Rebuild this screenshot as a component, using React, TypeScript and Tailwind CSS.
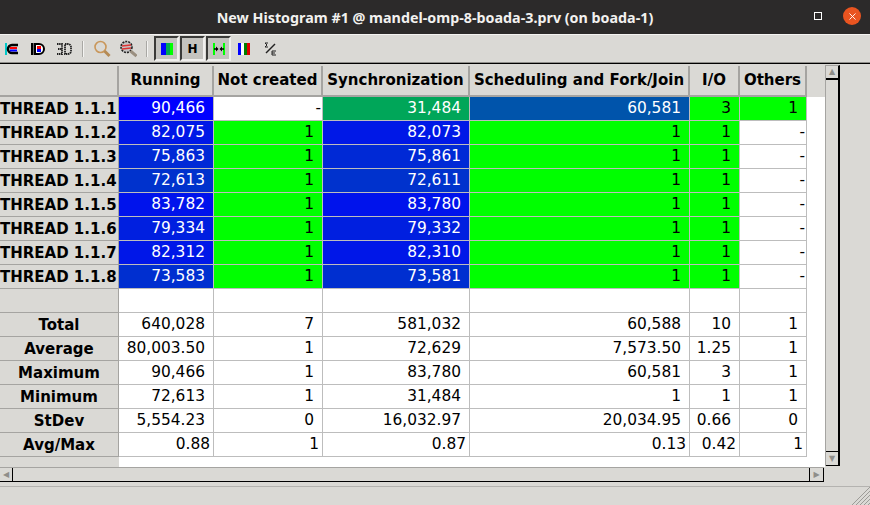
import { X } from 'lucide-react';

type Cell = { text: string; bg?: string; light?: boolean };

const columns = [
  { title: 'Running', width: 'w-[95px]' },
  { title: 'Not created', width: 'w-[109px]' },
  { title: 'Synchronization', width: 'w-[147px]' },
  { title: 'Scheduling and Fork/Join', width: 'w-[220px]' },
  { title: 'I/O', width: 'w-[50px]' },
  { title: 'Others', width: 'w-[67px]' },
];

const green = 'bg-[#00ff00]';

const threadRow = (label: string, running: string, sync: string, bg: string) => ({
  label,
  cells: [
    { text: running, bg, light: true },
    { text: '1', bg: green },
    { text: sync, bg, light: true },
    { text: '1', bg: green },
    { text: '1', bg: green },
    { text: '-' },
  ] as Cell[],
});

const threads = [
  {
    label: 'THREAD 1.1.1',
    cells: [
      { text: '90,466', bg: 'bg-[#0000ff]', light: true },
      { text: '-' },
      { text: '31,484', bg: 'bg-[#00a659]', light: true },
      { text: '60,581', bg: 'bg-[#0054ab]', light: true },
      { text: '3', bg: green },
      { text: '1', bg: green },
    ] as Cell[],
  },
  threadRow('THREAD 1.1.2', '82,075', '82,073', 'bg-[#0018e7]'),
  threadRow('THREAD 1.1.3', '75,863', '75,861', 'bg-[#0029d6]'),
  threadRow('THREAD 1.1.4', '72,613', '72,611', 'bg-[#0032cd]'),
  threadRow('THREAD 1.1.5', '83,782', '83,780', 'bg-[#0013ec]'),
  threadRow('THREAD 1.1.6', '79,334', '79,332', 'bg-[#001fe0]'),
  threadRow('THREAD 1.1.7', '82,312', '82,310', 'bg-[#0017e8]'),
  threadRow('THREAD 1.1.8', '73,583', '73,581', 'bg-[#002fd0]'),
];

const stats = [
  { label: 'Total', values: ['640,028', '7', '581,032', '60,588', '10', '1'] },
  { label: 'Average', values: ['80,003.50', '1', '72,629', '7,573.50', '1.25', '1'] },
  { label: 'Maximum', values: ['90,466', '1', '83,780', '60,581', '3', '1'] },
  { label: 'Minimum', values: ['72,613', '1', '31,484', '1', '1', '1'] },
  { label: 'StDev', values: ['5,554.23', '0', '16,032.97', '20,034.95', '0.66', '0'] },
  { label: 'Avg/Max', values: ['0.88', '1', '0.87', '0.13', '0.42', '1'] },
];

const Row = ({ label, cells, center, tight }: { label: string; cells: Cell[]; center?: boolean; tight?: boolean }) => (
  <div className="flex h-6">
    <div className={`flex w-[119px] items-center whitespace-nowrap border-r border-b border-[#a5a4a1] bg-[#dad9d5] pt-px text-[15px] font-bold ${center ? 'justify-center' : ''}`}>
      {label}
    </div>
    {cells.map((cell, i) => (
      <div
        key={i}
        className={`flex ${columns[i].width} items-center justify-end border-r border-b border-[#bdbdbd] pt-px ${cell.text === '-' ? 'pr-px' : tight ? 'pr-[3px]' : 'pr-2'} ${cell.bg ?? 'bg-white'} ${cell.light ? 'text-white' : 'text-black'}`}
      >
        {cell.text}
      </div>
    ))}
  </div>
);

const ToolButton = ({ children }: { children: React.ReactNode }) => (
  <div className="flex h-[25px] w-[25px] items-center justify-center border-2 border-[#3a3a38] border-r-[#f0efed] border-b-[#f0efed] bg-[#c4c3bf]">
    {children}
  </div>
);

const Separator = () => <div className="h-[16px] w-[2px] border-l border-[#a9a8a4] bg-[#f4f4f2]" />;

const ToolbarIcons = () => (
  <div className="flex h-[27px] items-center pl-[4px]">
    <svg width="16" height="16" viewBox="0 0 16 16">
      <rect x="1" y="2" width="2" height="12" fill="#00c8c8" />
      <path d="M14 4H8a4 4 0 0 0 0 8h6" fill="none" stroke="#000" strokeWidth="2.5" />
      <path d="M6 7h7" stroke="#f00" strokeWidth="2" />
      <path d="M6 9.5h7" stroke="#00f" strokeWidth="2" />
    </svg>
    <div className="w-[10px]" />
    <svg width="16" height="16" viewBox="0 0 16 16">
      <rect x="1" y="2" width="2.5" height="12" fill="#000" />
      <path d="M5 3h4a5 5 0 0 1 0 10H5z" fill="#fff" stroke="#000" strokeWidth="2" />
      <rect x="7" y="5" width="4" height="3" fill="#f00" />
      <rect x="7" y="8" width="4" height="3" fill="#00f" />
    </svg>
    <div className="w-[10px]" />
    <svg width="16" height="16" viewBox="0 0 16 16" fill="none" stroke="#222" strokeWidth="1.8" strokeDasharray="1.5 0.6">
      <path d="M1 3h5v10H1M2 8h4" />
      <path d="M9 3h3a3 3 0 0 1 3 3v4a3 3 0 0 1-3 3H9z" />
    </svg>
    <div className="w-[10px]" />
    <Separator />
    <div className="w-[9px]" />
    <svg width="18" height="18" viewBox="0 0 18 18" fill="none">
      <circle cx="7.5" cy="7" r="5.5" stroke="#c9975b" strokeWidth="1.6" />
      <path d="M11.5 11l5 5" stroke="#b58b55" strokeWidth="3" />
    </svg>
    <div className="w-[8px]" />
    <svg width="18" height="18" viewBox="0 0 18 18" fill="none">
      <circle cx="7.5" cy="7" r="5.5" fill="#c5c5c5" stroke="#222" strokeWidth="1.6" strokeDasharray="2 1" />
      <path d="M3 6l9-1M3 9l9-1" stroke="#d33" strokeWidth="1.6" />
      <path d="M11.5 11l6 5" stroke="#9a8f80" strokeWidth="3" />
    </svg>
    <div className="w-[9px]" />
    <Separator />
    <div className="w-[6px]" />
    <ToolButton>
      <svg width="14" height="12" viewBox="0 0 14 12">
        <rect x="1" y="0" width="5" height="12" fill="#0000ff" />
        <rect x="6" y="0" width="4" height="12" fill="#00a952" />
        <rect x="10" y="0" width="3" height="12" fill="#00ff00" />
      </svg>
    </ToolButton>
    <div className="w-[1px]" />
    <ToolButton>
      <span className="text-[12px] leading-none font-black text-black">H</span>
    </ToolButton>
    <div className="w-[1px]" />
    <ToolButton>
      <svg width="14" height="12" viewBox="0 0 14 12">
        <rect x="1" y="0" width="2" height="12" fill="#00ff00" />
        <rect x="11" y="0" width="2" height="12" fill="#00ff00" />
        <path d="M2 6h3M12 6H9" stroke="#000" strokeWidth="1.4" />
        <path d="M6.5 6L4 3.5v5zM7.5 6L10 3.5v5z" fill="#000" />
      </svg>
    </ToolButton>
    <div className="w-[5px]" />
    <svg width="16" height="12" viewBox="0 0 16 12">
      <rect x="2" y="0" width="3" height="12" fill="#0000ff" />
      <rect x="5" y="0" width="3" height="12" fill="#ffffff" />
      <rect x="8" y="0" width="3" height="12" fill="#008000" />
      <rect x="11" y="0" width="3" height="12" fill="#e00000" />
    </svg>
    <div className="w-[10px]" />
    <svg width="16" height="16" viewBox="0 0 16 16" fill="none" stroke="#222" strokeWidth="1">
      <path d="M6 2H3l2 2-2 2h3" />
      <path d="M4 12L13 3" strokeWidth="1.4" />
      <path d="M14 10h-4v4h4M10 12h3" />
    </svg>
  </div>
);

export default function App() {
  return (
    <div className="relative flex h-[505px] w-[870px] flex-col overflow-hidden bg-[#dad9d5] font-['DejaVu_Sans',sans-serif] text-[15.4px] text-black">
      <div className="relative flex h-[34px] shrink-0 items-center justify-center bg-[#2c2a2a] pt-px font-['Noto_Sans',sans-serif] text-[14.3px] font-bold text-[#f2f1ef]">
        New Histogram #1 @ mandel-omp-8-boada-3.prv (on boada-1)
        <div className="absolute top-[12px] left-[814px] h-[8px] w-[8px] border border-white" />
        <div className="absolute top-[7px] left-[843px] flex h-[18px] w-[18px] items-center justify-center rounded-full bg-[#e95420]">
          <X size={11} color="#ffffff" strokeWidth={2} />
        </div>
      </div>
      <div className="h-px shrink-0 bg-[#f4f3f1]" />
      <ToolbarIcons />
      <div className="h-px shrink-0 bg-[#8f8e8a]" />
      <div className="h-px shrink-0 bg-black" />

      <div className="flex min-h-0 flex-1">
        <div className="flex w-[825px] flex-col pt-[2px] pb-[4px]">
          <div className="flex h-[31px] text-[15px] font-bold">
            <div className="w-[119px] border-r-2 border-b-2 border-[#a5a4a1] bg-[#dad9d5]" />
            {columns.map((col) => (
              <div
                key={col.title}
                className={`flex ${col.width} items-center justify-center whitespace-nowrap border-r-2 border-b-2 border-[#a5a4a1]`}
              >
                {col.title}
              </div>
            ))}
            <div className="flex-1 bg-[#dad9d5]" />
          </div>
          <div className="flex h-[370px] flex-col bg-white">
            {threads.map((t) => (
              <Row key={t.label} label={t.label} cells={t.cells} />
            ))}
            <Row label="" cells={columns.map(() => ({ text: '' }))} />
            {stats.map((s) => (
              <Row key={s.label} label={s.label} center tight={s.label === 'Avg/Max'} cells={s.values.map((text) => ({ text }))} />
            ))}
            <div className="w-[119px] flex-1 bg-[#dad9d5]" />
          </div>
          <div className="mr-px flex h-[15px] items-stretch border-t border-[#a5a4a1] border-b border-b-black">
            <div className="flex w-[13px] items-center justify-center border-r border-black text-[8px] leading-none text-[#8f8e8a]">
              ◀
            </div>
            <div className="flex-1" />
            <div className="flex w-[15px] items-center justify-center border-r border-l border-black text-[8px] leading-none text-[#8f8e8a]">
              ▶
            </div>
          </div>
        </div>
        <div className="mt-px flex h-[401px] w-[15px] flex-col border-t border-l border-[#a5a4a1] border-r-2 border-r-black">
          <div className="flex h-[14px] items-center justify-center border-b-2 border-black text-[8px] leading-none text-[#8f8e8a]">▲</div>
          <div className="flex-1" />
          <div className="flex h-[15px] items-center justify-center border-t border-b border-black text-[8px] leading-none text-[#8f8e8a]">▼</div>
        </div>
      </div>

      <div className="relative h-[19px] shrink-0 border-t border-[#b4b3b0] bg-[#dad9d5]">
        <svg className="absolute right-0 bottom-0" width="18" height="18" viewBox="0 0 18 18" stroke="#9c9b97" strokeWidth="1">
          <path d="M18 0L0 18M18 4L4 18M18 8L8 18M18 12L12 18M18 16L16 18" />
        </svg>
      </div>
    </div>
  );
}
